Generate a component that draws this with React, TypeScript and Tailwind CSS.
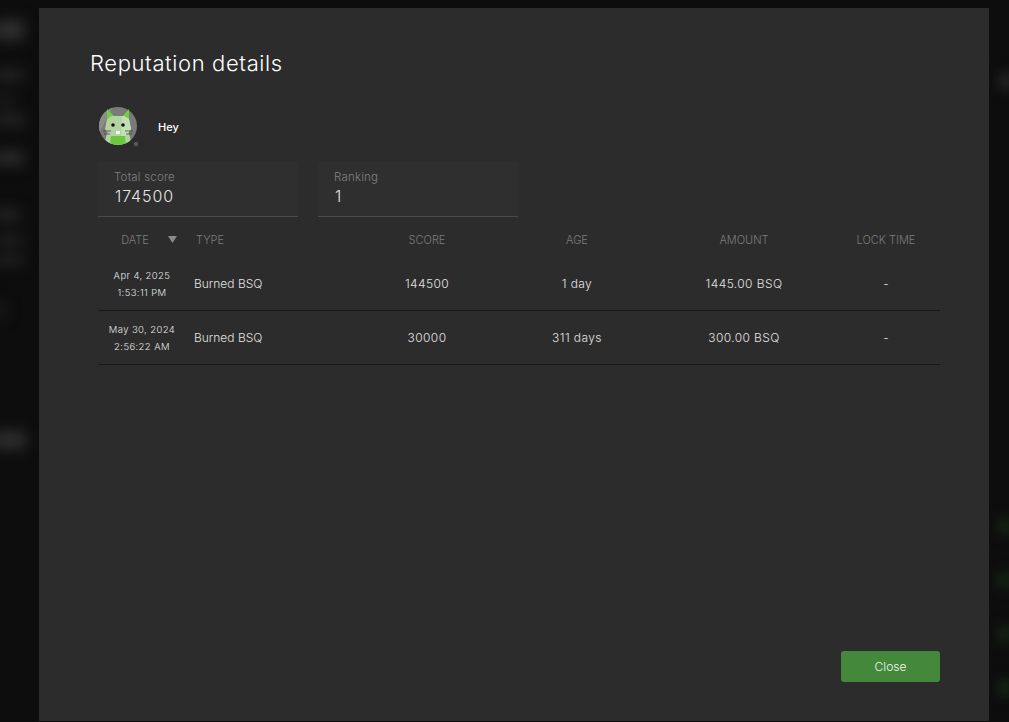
const rows = [
  { date: "Apr 4, 2025", time: "1:53:11 PM", type: "Burned BSQ", score: "144500", age: "1 day", amount: "1445.00 BSQ", lock: "-" },
  { date: "May 30, 2024", time: "2:56:22 AM", type: "Burned BSQ", score: "30000", age: "311 days", amount: "300.00 BSQ", lock: "-" },
];

const cols = "grid grid-cols-[88px_171px_140px_160px_174px_110px]";

// blurred page rows that show behind the dialog
const leftGhosts = [
  { h: "h-[20px]", w: "w-[30px]", mt: "mt-[20px]", c: "bg-[#303030]" },
  { h: "h-[12px]", w: "w-[30px]", mt: "mt-[29px]", c: "bg-[#242424]" },
  { h: "h-[10px]", w: "w-[20px]", mt: "mt-[14px]", c: "bg-[#1e1e1e]" },
  { h: "h-[12px]", w: "w-[32px]", mt: "mt-[9px]", c: "bg-[#242424]" },
  { h: "h-[14px]", w: "w-[30px]", mt: "mt-[25px]", c: "bg-[#2c2c2c]" },
  { h: "h-[12px]", w: "w-[26px]", mt: "mt-[44px]", c: "bg-[#262626]" },
  { h: "h-[10px]", w: "w-[30px]", mt: "mt-[14px]", c: "bg-[#222]" },
  { h: "h-[10px]", w: "w-[30px]", mt: "mt-[10px]", c: "bg-[#222]" },
  { h: "h-[14px]", w: "w-[12px]", mt: "mt-[38px]", c: "bg-[#1c1c1c]" },
  { h: "h-[18px]", w: "w-[32px]", mt: "mt-[114px]", c: "bg-[#303030]" },
];

function Avatar() {
  return (
    <svg width="42" height="42" viewBox="0 0 42 42" className="block">
      <defs>
        <clipPath id="av">
          <circle cx="20" cy="19" r="19" />
        </clipPath>
      </defs>
      <circle cx="20" cy="19" r="19" fill="#7a7a7a" />
      <g clipPath="url(#av)">
        <path d="M1 0h14L1 26z" fill="#8d8d8d" />
        <path d="M9 26h22l3 13H6z" fill="#b3d4a0" />
        <path d="M13 28h14l1 11H12z" fill="#6cc63f" />
      </g>
      <path d="M9 2l9 9-9 3z" fill="#6ed13c" />
      <path d="M31 2l-8 9 8 3z" fill="#6ed13c" />
      <path d="M9 12l5-3h12l5 3 2 10-5 7H12l-5-7z" fill="#b3d4a0" />
      <path d="M24 9h2l5 3 2 10-5 7h-5z" fill="#c4dfb6" />
      <circle cx="15" cy="18" r="1.8" fill="#111" />
      <circle cx="25" cy="18" r="1.8" fill="#111" />
      <rect x="18" y="24" width="4" height="3" fill="#f4f4f4" />
      <path d="M5 24h8M6 27h6M27 24h8M28 27h6" stroke="#3a3a3a" strokeWidth="0.7" />
      <circle cx="38" cy="37" r="2.2" fill="#5a5a5a" />
    </svg>
  );
}

function ScoreCard({ label, value }: { label: string; value: string }) {
  return (
    <div className="w-[200px] h-[56px] rounded-t-[4px] bg-[#2f2f2f] border-b border-[#4a4a4a] pl-4 pt-[8px]">
      <div className="text-[11.5px] leading-[16px] font-light text-[#808080] tracking-[0.2px]">{label}</div>
      <div className="ml-px text-[16px] leading-[22px] font-light text-[#e6e6e6] tracking-[0.9px]">{value}</div>
    </div>
  );
}

export default function App() {
  return (
    <div className="relative w-[1009px] h-[722px] overflow-hidden bg-[#0d0d0d] font-['Inter','Liberation_Sans',sans-serif]">
      <div className="absolute -left-[6px] top-0 w-[39px] blur-[7px]">
        {leftGhosts.map((g, i) => (
          <div key={i} className={`${g.h} ${g.w} ${g.mt} ${g.c}`} />
        ))}
      </div>
      <div className="absolute -right-[4px] top-[72px] h-[18px] w-[14px] bg-[#242424] blur-[6px]" />
      <div className="absolute -right-[4px] top-[518px] flex w-[16px] flex-col gap-[38px] blur-[6px]">
        <div className="h-[16px] bg-[#142414]" />
        <div className="h-[16px] bg-[#142414]" />
        <div className="h-[16px] bg-[#142414]" />
        <div className="h-[16px] bg-[#142414]" />
      </div>

      <div className="absolute left-[39px] top-[8px] flex h-[713px] w-[950px] flex-col bg-[#2c2c2c] pl-[51px] pr-[49px]">
        <h1 className="mt-[41px] text-[22px] leading-[28px] font-light text-white tracking-[0.62px]">Reputation details</h1>

        <div className="mt-[30px] ml-[8px] flex items-center">
          <Avatar />
          <span className="ml-[18px] text-[11px] font-medium text-white -translate-y-px">Hey</span>
        </div>

        <div className="ml-[8px] mt-[12px] flex gap-5">
          <ScoreCard label="Total score" value="174500" />
          <ScoreCard label="Ranking" value="1" />
        </div>

        <div className="ml-[8px] mt-[8px] w-[842px]">
          <div className={`${cols} h-[32px] items-center pb-[2px] text-[11px] font-light text-[#7c7c7c]`}>
            <div className="relative text-center pr-[12px] -translate-x-px">
              DATE
              <svg width="9" height="7" viewBox="0 0 9 7" className="absolute right-[8px] top-[4px]">
                <path d="M0 0h9L4.5 7z" fill="#8a8a8a" />
              </svg>
            </div>
            <div className="pl-[10px]">TYPE</div>
            <div className="text-center">SCORE</div>
            <div className="text-center">AGE</div>
            <div className="text-center">AMOUNT</div>
            <div className="text-center">LOCK TIME</div>
          </div>
          {rows.map((r) => (
            <div key={r.date} className={`${cols} h-[54px] items-center border-b border-[#181818] text-[12px] font-light text-[#e2e2e2]`}>
              <div className="text-center text-[9.5px] leading-[17px] font-light text-[#e4e4e4] tracking-[0.4px]">
                <div>{r.date}</div>
                <div>{r.time}</div>
              </div>
              <div className="pl-[8px]">{r.type}</div>
              <div className="text-center tracking-[0.4px]">{r.score}</div>
              <div className="text-center tracking-[0.4px]">{r.age}</div>
              <div className="text-center tracking-[0.4px]">{r.amount}</div>
              <div className="text-center">{r.lock}</div>
            </div>
          ))}
        </div>

        <div className="flex-1" />
        <div className="mb-[39px] flex justify-end">
          <button className="h-[31px] w-[99px] rounded-[3px] bg-[#44893b] text-[12px] font-light text-[#f2f7f0]">Close</button>
        </div>
      </div>
    </div>
  );
}
